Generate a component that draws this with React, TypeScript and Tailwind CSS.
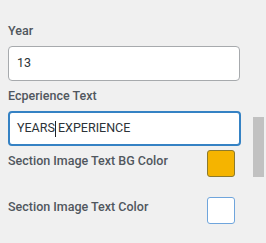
import React from "react";

export default function App() {
  return (
    <div className="relative w-[266px] h-[243px] overflow-hidden bg-[#f0f0f0]" style={{ fontFamily: "Roboto, 'Liberation Sans', sans-serif" }}>
      <div className="pl-[8px] pt-[23px] w-[240px] flex flex-col">
        <div className="text-[12.5px] leading-[16px] font-medium text-[#50575e]">Year</div>
        <div className="mt-[7px] h-[35px] w-[232px] rounded-[4px] border border-[#a7aaad] bg-white flex items-center pl-[8px] text-[12.5px] text-[#2c3338]">13</div>
        <div className="mt-[7px] text-[12.5px] leading-[16px] font-medium text-[#50575e]">Ecperience Text</div>
        <div className="mt-[7px] h-[35px] w-[233px] rounded-[4px] border-2 border-[#3582c4] bg-white flex items-center pl-[7px] text-[12.5px] text-[#2c3338]">
          <span>YEARS</span>
          <span className="relative inline-block w-0 h-[16px]">
            <span className="absolute left-0 top-0 h-[16px] w-px bg-[#1d2327]" />
          </span>
          <span className="whitespace-pre"> EXPERIENCE</span>
        </div>
        <div className="mt-[4px] flex items-start justify-between w-[227px]">
          <div className="mt-[3px] text-[12.5px] leading-[16px] font-medium text-[#50575e]">Section Image Text BG Color</div>
          <div className="w-[28px] h-[27px] rounded-[3px] border border-[#8c7a2e] bg-[#f5b400]" />
        </div>
        <div className="mt-[20px] flex items-start justify-between w-[227px]">
          <div className="mt-[2px] text-[12.5px] leading-[16px] font-medium text-[#50575e]">Section Image Text Color</div>
          <div className="w-[28px] h-[27px] rounded-[3px] border border-[#6fa5dc] bg-white" />
        </div>
      </div>
      <div className="absolute left-[253px] top-[117px] w-[11px] h-[60px] bg-[#c1c1c1]" />
    </div>
  );
}
